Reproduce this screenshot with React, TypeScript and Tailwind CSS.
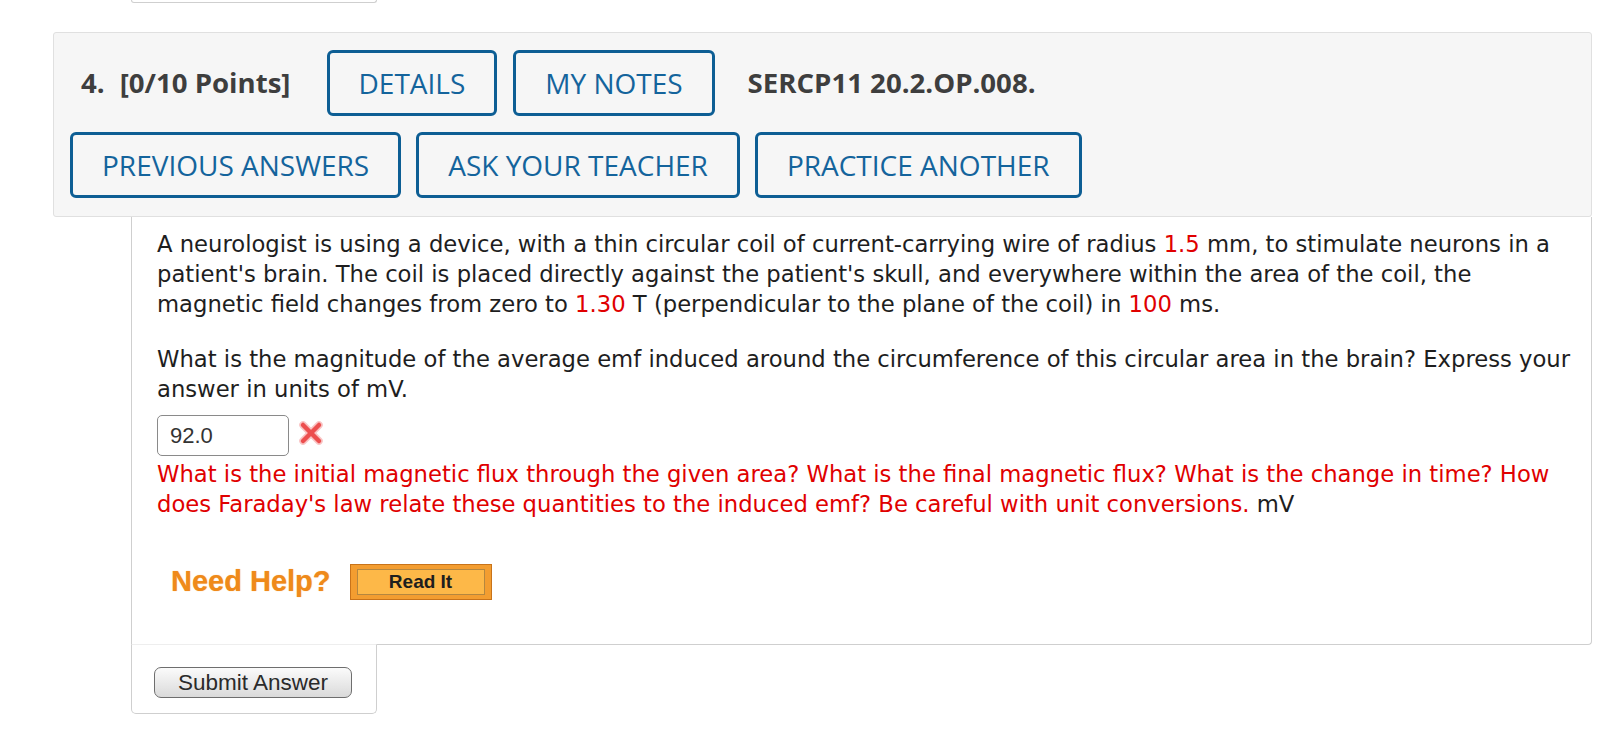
import React from "react";

const btn =
  "border-[3px] border-[#0d5e94] rounded-[6px] px-[29px] py-[11px] leading-[38px] text-[28px] text-[#14649c] bg-[#f6f6f6] whitespace-nowrap";

const RedX = () => (
  <svg width="26" height="24" viewBox="0 0 26 24" className="ml-[9px] mt-[6px]">
    <g stroke="#f58a8a" strokeWidth="7.5" strokeLinecap="round" opacity="0.5">
      <line x1="5" y1="4" x2="21" y2="20" />
      <line x1="21" y1="4" x2="5" y2="20" />
    </g>
    <g stroke="#ec4f4f" strokeWidth="4.5" strokeLinecap="round">
      <line x1="5" y1="4" x2="21" y2="20" />
      <line x1="21" y1="4" x2="5" y2="20" />
    </g>
  </svg>
);

const Red = ({ children }: { children: React.ReactNode }) => (
  <span className="text-[#e00000]">{children}</span>
);

const App = () => {
  return (
    <div className="w-[1620px] h-[733px] overflow-hidden bg-white">
      {/* tail of the previous question */}
      <div className="ml-[131px] w-[246px] h-[3px] border-x border-b border-[#cfcfcf] rounded-b-[4px]" />

      {/* header panel */}
      <div className="mt-[29px] ml-[53px] w-[1539px] border border-[#e0e0e0] rounded-[3px] bg-[#f6f6f6] pl-[16px] pt-[17px] pb-[18px] font-['Open_Sans',sans-serif]">
        <div className="flex items-center pl-[11px]">
          <span className="text-[27.6px] font-bold text-[#3e3e3e]">4.</span>
          <span className="ml-[15px] text-[27.6px] font-bold text-[#3e3e3e]">[0/10 Points]</span>
          <button className={btn + " ml-[36px]"}>DETAILS</button>
          <button className={btn + " ml-[16px]"}>MY NOTES</button>
          <span className="ml-[33px] text-[27.6px] font-bold text-[#3e3e3e]">SERCP11 20.2.OP.008.</span>
        </div>
        <div className="flex items-center gap-[15px] mt-[16px]">
          <button className={btn}>PREVIOUS ANSWERS</button>
          <button className={btn}>ASK YOUR TEACHER</button>
          <button className={btn}>PRACTICE ANOTHER</button>
        </div>
      </div>

      {/* question body */}
      <div className="ml-[131px] w-[1461px] border-x border-b border-[#cfcfcf] rounded-br-[4px] pl-[25px] pr-[8px] pt-[12px] pb-[40px]">
        <div className="font-['DejaVu_Sans',Verdana,sans-serif] text-[22.7px] leading-[30px] text-[#1e1e1e]">
          <p>
            A neurologist is using a device, with a thin circular coil of current-carrying wire of radius{" "}
            <Red>1.5</Red> mm, to stimulate neurons in a patient's brain. The coil is placed directly against
            the patient's skull, and everywhere within the area of the coil, the magnetic field changes from
            zero to <Red>1.30</Red> T (perpendicular to the plane of the coil) in <Red>100</Red> ms.
          </p>
          <p className="mt-[25px]">
            What is the magnitude of the average emf induced around the circumference of this circular area in
            the brain? Express your answer in units of mV.
          </p>
        </div>

        <div className="flex items-start mt-[11px]">
          <div className="w-[132px] h-[41px] border border-[#8a8a8a] rounded-[5px] pl-[12px] flex items-center font-['Liberation_Sans',Arial,sans-serif] text-[22px] text-[#333]">
            92.0
          </div>
          <RedX />
        </div>

        <p className="mt-[3px] font-['DejaVu_Sans',Verdana,sans-serif] text-[22.7px] leading-[30px] text-[#1e1e1e]">
          <Red>
            What is the initial magnetic flux through the given area? What is the final magnetic flux? What is
            the change in time? How does Faraday's law relate these quantities to the induced emf? Be careful
            with unit conversions.
          </Red>{" "}
          mV
        </p>

        <div className="flex items-center mt-[41px] ml-[14px]">
          <span className="font-['Liberation_Sans',Arial,sans-serif] font-bold text-[29px] text-[#ef8a1a] [text-shadow:0_0_1px_#f5b060]">
            Need Help?
          </span>
          <div className="ml-[19px] w-[142px] h-[36px] border border-[#c8731a] bg-[#f39d30] px-[6px] py-[4px]">
            <div className="h-full border border-[#b5873f] bg-[#fdb848] flex items-center justify-center font-['Liberation_Sans',Arial,sans-serif] font-bold text-[19px] text-[#1e1e1e]">
              Read It
            </div>
          </div>
        </div>
      </div>

      {/* submit area */}
      <div className="relative -mt-px ml-[131px] w-[246px] border-x border-b border-t border-x-[#cfcfcf] border-b-[#cfcfcf] border-t-[#eeeeee] rounded-b-[5px] pl-[22px] pt-[22px] pb-[15px]">
        <button className="w-[198px] h-[31px] border border-[#6e6e6e] rounded-[7px] bg-gradient-to-b from-[#fbfbfb] to-[#dadada] font-['Liberation_Sans',Arial,sans-serif] text-[22.5px] leading-[29px] text-[#2a2a2a]">
          Submit Answer
        </button>
      </div>
    </div>
  );
};

export default App;
